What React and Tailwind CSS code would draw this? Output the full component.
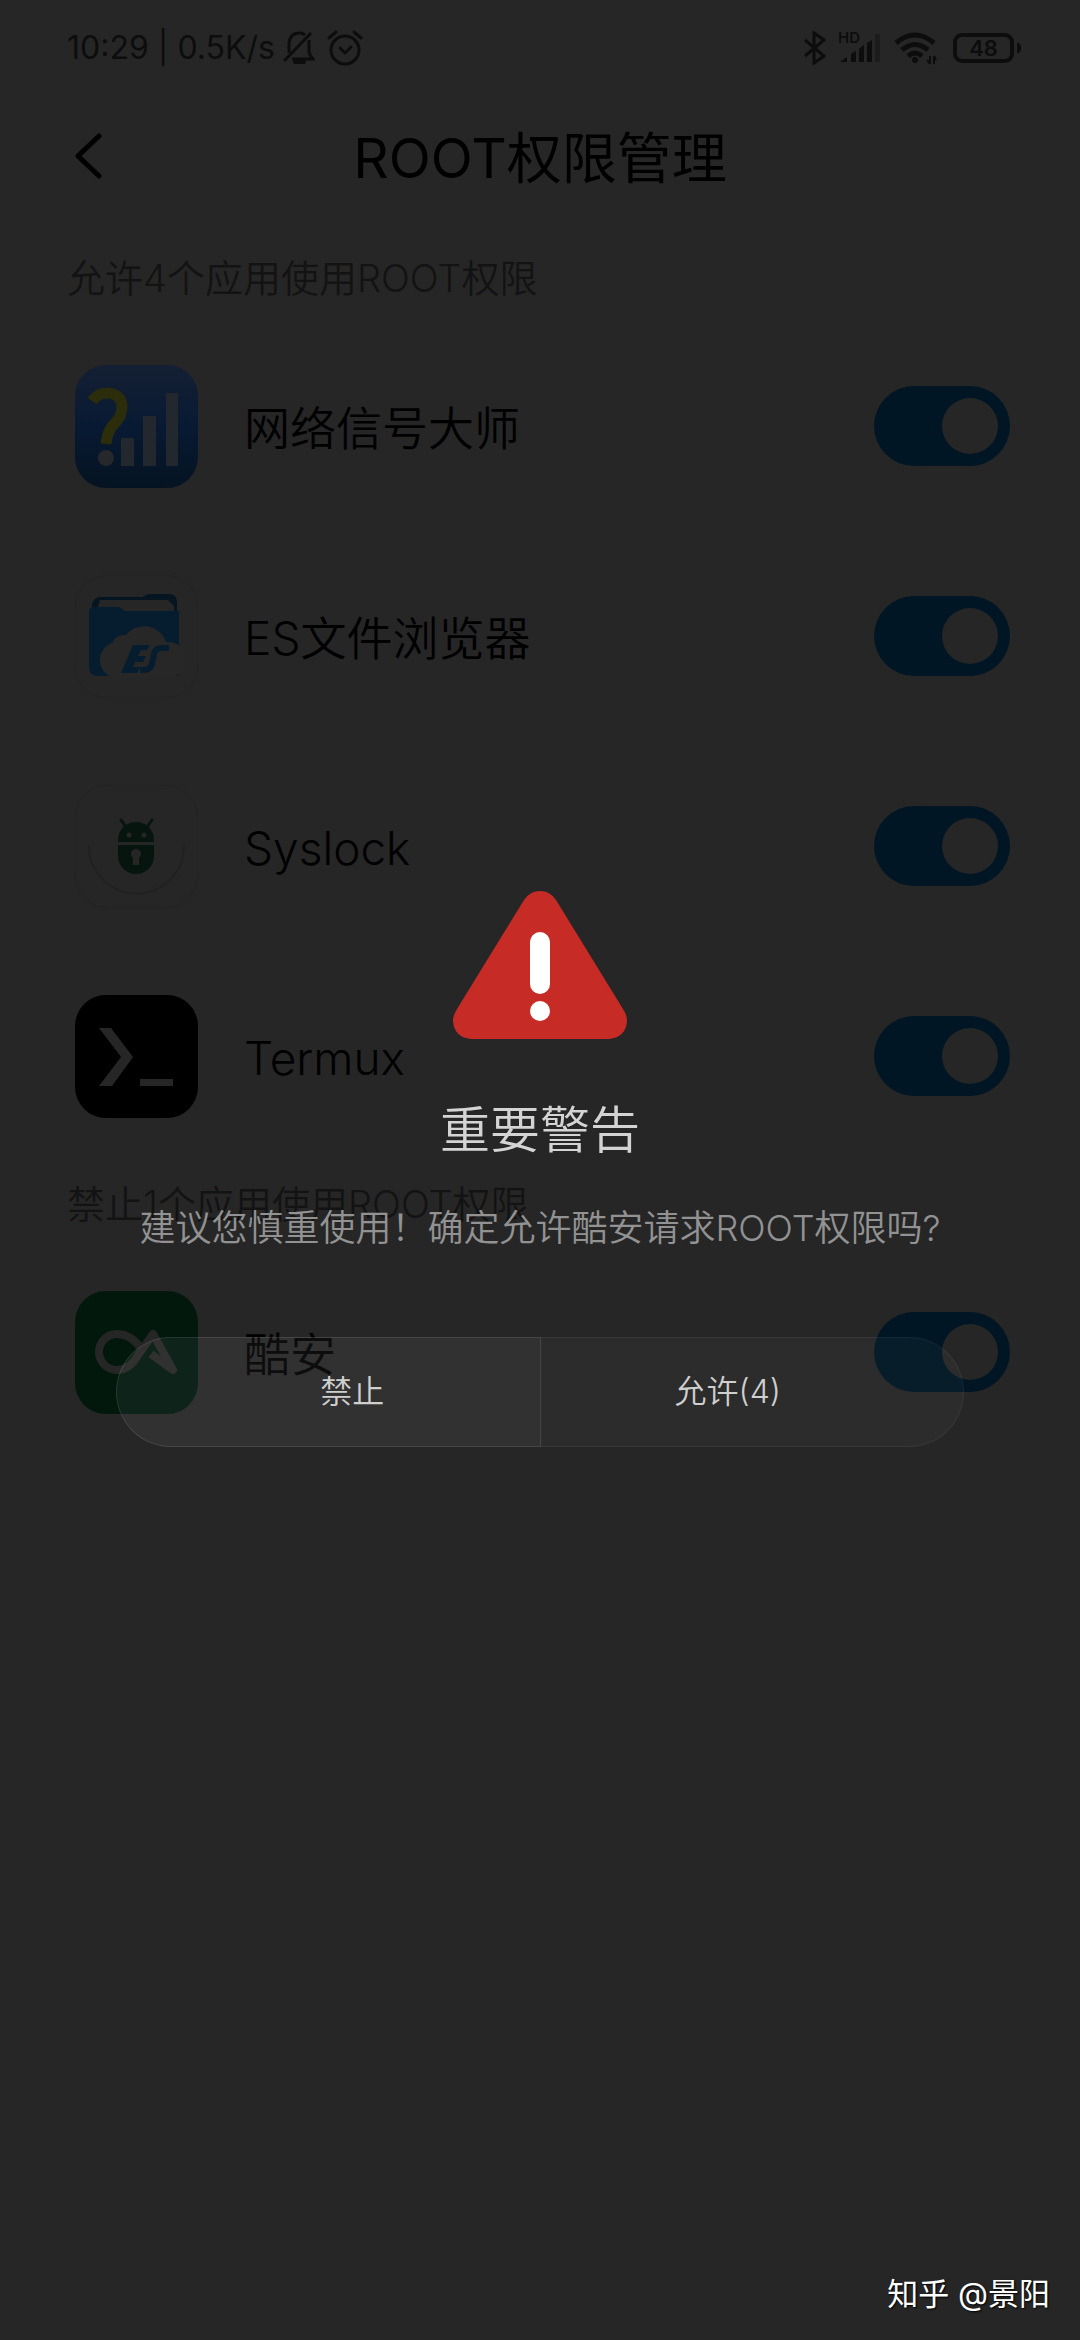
import React from 'react';

const NetworkIcon = () => (
    <svg viewBox="0 0 123 123" className="w-full h-full">
        <defs>
            <linearGradient id="net" x1="0" y1="0" x2="0" y2="1">
                <stop offset="0" stopColor="#141f33" />
                <stop offset="0.5" stopColor="#081a33" />
                <stop offset="1" stopColor="#051321" />
            </linearGradient>
        </defs>
        <rect width="123" height="123" rx="31" fill="url(#net)" />
        <path d="M17 36 Q23 28 32 28 Q47 29 47 42 Q47 51 40 58 Q32 66 31 79" fill="none" stroke="#2b2d0b" strokeWidth="11" />
        <circle cx="31" cy="93" r="8" fill="#26282b" />
        <rect x="46" y="73" width="13" height="28" fill="#23282e" />
        <rect x="68" y="51" width="13" height="50" fill="#23282e" />
        <rect x="91" y="28" width="12" height="73" fill="#23282e" />
    </svg>
);

const EsIcon = () => (
    <svg viewBox="0 0 123 123" className="w-full h-full">
        <rect x="0.5" y="0.5" width="122" height="122" rx="31" fill="#262626" stroke="#232323" />
        <path d="M17 36 V30 Q18 22 26 22 H68 Q71 19 75 19 H94 Q102 19 102 28 V40 H17 Z" fill="#051521" />
        <path d="M22 34 L25 25 H93 L99 31 V38 H22 Z" fill="#262626" />
        <path d="M14 37 Q14 32 19 32 H43 Q46 32 49 36 H104 V101 H24 Q14 101 14 92 Z" fill="#061d2f" />
        <path d="M42 103 A18 18 0 0 1 37 68 A13 13 0 0 1 51 60 A23 23 0 0 1 91 67 A18 18 0 0 1 95 103 Z" fill="#272727" />
        <path d="M58 70 H75 L72 75 H66 L63 81 H71 L68 87 H60 L58 92 H65 L62 98 H46 Z" fill="#061d2f" />
        <path d="M94 73 H86 Q80 73 79 79 L77 89 Q75 95 69 95 H65" fill="none" stroke="#061d2f" strokeWidth="6" />
    </svg>
);

const SyslockIcon = () => (
    <svg viewBox="0 0 123 123" className="w-full h-full">
        <rect x="0.5" y="0.5" width="122" height="122" rx="31" fill="#262626" stroke="#232323" />
        <path d="M14 61 A47 47 0 0 0 109 61" fill="none" stroke="#212121" strokeWidth="2" />
        <path d="M46 35 L51 42 M77 35 L72 42" stroke="#07150f" strokeWidth="3" strokeLinecap="round" />
        <path d="M43 57 V55 A18 18 0 0 1 79 55 V57 Z" fill="#07150f" />
        <path d="M43 60 H79 V71 A18 18 0 0 1 43 71 Z" fill="#07150f" />
        <circle cx="54" cy="50" r="2.5" fill="#262626" />
        <circle cx="69" cy="50" r="2.5" fill="#262626" />
        <circle cx="61" cy="69" r="5" fill="#262626" />
        <path d="M58 70 H64 V80 H58 Z" fill="#262626" />
    </svg>
);

const TermuxIcon = () => (
    <svg viewBox="0 0 123 123" className="w-full h-full">
        <rect width="123" height="123" rx="31" fill="#000000" />
        <path d="M24 33 H36 L58 62 L37 91 H24 L46 62 Z" fill="#262626" />
        <rect x="65" y="84" width="33" height="7" fill="#262626" />
    </svg>
);

const CoolapkIcon = () => (
    <svg viewBox="0 0 123 123" className="w-full h-full">
        <rect width="123" height="123" rx="31" fill="#02180d" />
        <path
            d="M65 56 Q55 43 42 43 A18 18 0 0 0 42 79 Q52 79 59 70 L78 43 L98 79 L76 63"
            fill="none"
            stroke="#262626"
            strokeWidth="8"
            strokeLinejoin="round"
        />
    </svg>
);

const allowedApps = [
    { name: "网络信号大师", icon: <NetworkIcon /> },
    { name: "ES文件浏览器", icon: <EsIcon /> },
    { name: "Syslock", icon: <SyslockIcon /> },
    { name: "Termux", icon: <TermuxIcon /> },
];

const deniedApps = [{ name: "酷安", icon: <CoolapkIcon /> }];

function StatusBar() {
    return (
        <div className="h-24 pl-[67px] pr-[59px] flex items-center justify-between text-[#0d0d0d]">
            <div className="flex items-center gap-2">
                <span className="text-[32px] leading-10">10:29 | 0.5K/s</span>
                <div className="flex items-center gap-3">
                    <svg width="32" height="34" viewBox="0 0 32 34" fill="none" stroke="currentColor" strokeWidth="3">
                        <path d="M6 22 V12 Q7 2 17 2 Q20 2 22 4 M26 9 V20 Q26 24 30 28 H9" />
                        <path d="M28 2 L1 30" />
                        <path d="M12 31 H21" strokeWidth="4" strokeLinecap="round" />
                    </svg>
                    <svg width="36" height="36" viewBox="0 0 36 36" fill="none" stroke="currentColor" strokeWidth="3" strokeLinecap="round">
                        <circle cx="18" cy="20" r="14" />
                        <path d="M13 18 L18 23 L24 17 M2 8 L9 2 M34 8 L27 2" />
                    </svg>
                </div>
            </div>
            <div className="flex items-center">
                <svg width="22" height="34" viewBox="0 0 22 34" fill="none" stroke="currentColor" strokeWidth="3">
                    <path d="M1 9 L20 25 L10 32 V2 L20 9 L1 25" />
                </svg>
                <svg width="44" height="46" viewBox="0 -6 44 46" className="ml-3" fill="currentColor">
                    <text x="0" y="12" fontSize="15" fontWeight="600">HD</text>
                    <path d="M2 31 L9 26 V31 Z M13 23 L18 20 V31 H13 Z M21 18 L26 14 V31 H21 Z M29 12 L34 9 V31 H29 Z" />
                    <rect x="37" y="3" width="5" height="28" fill="#1c1c1c" />
                </svg>
                <svg width="43" height="34" viewBox="0 0 43 34" className="ml-3" fill="none" stroke="currentColor" strokeWidth="5">
                    <path d="M2 12 Q21 -4 40 12 M8 19 Q21 8 34 19 M14 25 Q21 19 28 25" />
                    <circle cx="21" cy="29" r="3" fill="currentColor" stroke="none" />
                    <path d="M36 25 V33 M33 29 L36 33 M40 33 V25 L42 29" strokeWidth="2" />
                </svg>
                <div className="ml-4 h-[30px] w-[61px] border-4 border-current rounded-[9px] flex items-center justify-center text-[22px] leading-none font-semibold">
                    48
                </div>
                <div className="ml-[3px] h-2.5 w-1 rounded-r bg-current"></div>
            </div>
        </div>
    );
}

function AppRow({ app }) {
    return (
        <label className="h-[210px] pl-[75px] pr-[70px] flex items-center">
            <span className="w-[123px] h-[123px] shrink-0">{app.icon}</span>
            <span className="ml-[46px] pt-1 flex-1 text-[46px] leading-[60px] font-[350] text-black">{app.name}</span>
            <input
                type="checkbox"
                role="switch"
                defaultChecked
                className="appearance-none shrink-0 w-[136px] h-20 px-3 rounded-full bg-[#001624] flex items-center justify-end before:content-[''] before:block before:size-14 before:rounded-full before:bg-[#262626]"
            />
        </label>
    );
}

function AppGroup({ title, apps }) {
    return (
        <section>
            <h2 className="h-[86px] px-[67px] flex items-center text-[38px] font-[350] text-[#131313]">{title}</h2>
            {apps.map((app) => (
                <AppRow key={app.name} app={app} />
            ))}
        </section>
    );
}

function WarningDialog() {
    return (
        <div role="alertdialog" aria-labelledby="warn-title" className="absolute inset-0 flex items-center justify-center px-[116px] pb-0.5">
            <div className="w-full flex flex-col items-center">
                <svg width="174" height="148" viewBox="0 0 174 148">
                    <path
                        d="M71 9 Q77 0 87 0 Q97 0 103 9 L170 118 Q174 124 174 130 Q173 146 156 148 H18 Q1 146 0 130 Q0 124 4 118 Z"
                        fill="#c62b26"
                    />
                    <rect x="77" y="41" width="20" height="62" rx="10" fill="#fff" />
                    <circle cx="87" cy="120" r="10" fill="#fff" />
                </svg>
                <h3 id="warn-title" className="mt-[61px] text-[50px] leading-[60px] font-[350] text-[#d4d4d4]">重要警告</h3>
                <p className="mt-[46px] text-[36px] leading-[44px] font-[350] text-[#929292] whitespace-nowrap">
                    建议您慎重使用！确定允许酷安请求ROOT权限吗?
                </p>
                <div className="mt-[87px] w-full h-[110px] flex text-[32px] font-[350] text-[#cfcfcf]">
                    <button className="flex-1 pl-12 rounded-l-full border border-white/10 bg-white/5">禁止</button>
                    <button className="flex-1 pr-12 rounded-r-full border border-l-0 border-white/5 bg-white/3">允许(4)</button>
                </div>
            </div>
        </div>
    );
}

export default function App() {
    return (
        <div className="relative min-h-screen bg-[#262626] font-['Inter','Noto_Sans_CJK_SC',sans-serif]">
            <StatusBar />
            <header className="h-[120px] px-[67px] mb-[19px] grid grid-cols-[48px_1fr_48px] items-center">
                <button aria-label="返回" className="pl-2">
                    <svg width="27" height="46" viewBox="0 0 27 46" fill="none" stroke="#000" strokeWidth="5" strokeLinecap="round" strokeLinejoin="round">
                        <path d="M24 3 L3 23 L24 43" />
                    </svg>
                </button>
                <h1 className="pt-1 text-center text-[55px] leading-[64px] text-black">ROOT权限管理</h1>
            </header>
            <AppGroup title="允许4个应用使用ROOT权限" apps={allowedApps} />
            <AppGroup title="禁止1个应用使用ROOT权限" apps={deniedApps} />
            <WarningDialog />
            <div className="absolute right-[30px] bottom-[26px] text-[31px] leading-10 text-white [text-shadow:1px_1px_2px_#000]">
                知乎 @景阳
            </div>
        </div>
    );
}
